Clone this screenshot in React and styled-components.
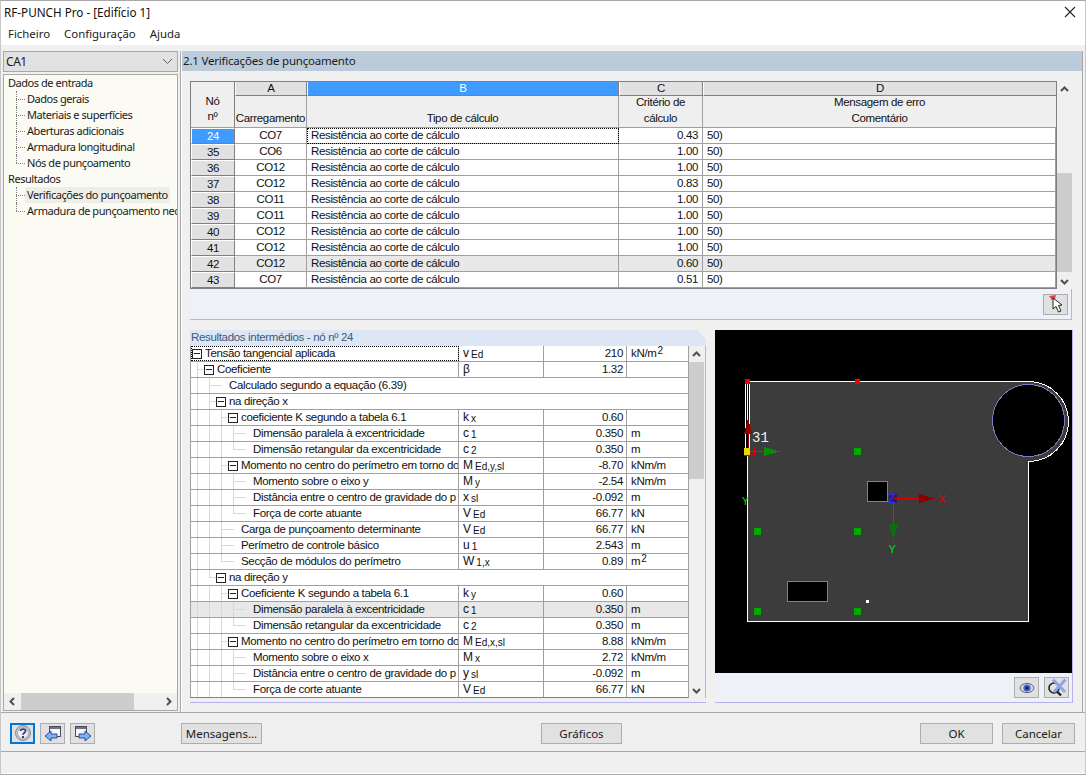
import React from "react";
import styled, { createGlobalStyle } from "styled-components";

const GlobalStyle = createGlobalStyle`
  html, body {
    margin: 0;
    padding: 0;
    background: #f0f0f0;
  }
  * {
    box-sizing: border-box;
  }
`;

const topRows = [
  ["24", "CO7", "0.43"],
  ["35", "CO6", "1.00"],
  ["36", "CO12", "1.00"],
  ["37", "CO12", "0.83"],
  ["38", "CO11", "1.00"],
  ["39", "CO11", "1.00"],
  ["40", "CO12", "1.00"],
  ["41", "CO12", "1.00"],
  ["42", "CO12", "0.60"],
  ["43", "CO7", "0.51"],
];

const inputItems = [
  "Dados gerais",
  "Materiais e superfícies",
  "Aberturas adicionais",
  "Armadura longitudinal",
  "Nós de punçoamento",
];

const resultItems = ["Verificações do punçoamento", "Armadura de punçoamento nec"];

// level, has expander, label, symbol, sub, value, unit, unit power
const detailRows = [
  { level: 0, open: true, label: "Tensão tangencial aplicada", sym: "v", sub: "Ed", value: "210", unit: "kN/m", pow: "2" },
  { level: 1, open: true, label: "Coeficiente", sym: "β", value: "1.32" },
  { level: 2, label: "Calculado segundo a equação (6.39)", wide: true },
  { level: 2, open: true, label: "na direção x", wide: true },
  { level: 3, open: true, label: "coeficiente K segundo a tabela 6.1", sym: "k", sub: "x", value: "0.60" },
  { level: 4, label: "Dimensão paralela à excentricidade", sym: "c", sub: "1", value: "0.350", unit: "m" },
  { level: 4, elbow: true, label: "Dimensão retangular da excentricidade", sym: "c", sub: "2", value: "0.350", unit: "m" },
  { level: 3, open: true, label: "Momento no centro do perímetro em torno do", sym: "M", sub: "Ed,y,sl", value: "-8.70", unit: "kNm/m" },
  { level: 4, label: "Momento sobre o eixo y", sym: "M", sub: "y", value: "-2.54", unit: "kNm/m" },
  { level: 4, label: "Distância entre o centro de gravidade do p", sym: "x", sub: "sl", value: "-0.092", unit: "m" },
  { level: 4, elbow: true, label: "Força de corte atuante", sym: "V", sub: "Ed", value: "66.77", unit: "kN" },
  { level: 3, label: "Carga de punçoamento determinante", sym: "V", sub: "Ed", value: "66.77", unit: "kN" },
  { level: 3, label: "Perímetro de controle básico", sym: "u", sub: "1", value: "2.543", unit: "m" },
  { level: 3, elbow: true, label: "Secção de módulos do perímetro", sym: "W", sub: "1,x", value: "0.89", unit: "m", pow: "2" },
  { level: 2, open: true, elbow: true, label: "na direção y", wide: true },
  { level: 3, open: true, label: "Coeficiente K segundo a tabela 6.1", sym: "k", sub: "y", value: "0.60" },
  { level: 4, label: "Dimensão paralela à excentricidade", sym: "c", sub: "1", value: "0.350", unit: "m", shade: true },
  { level: 4, elbow: true, label: "Dimensão retangular da excentricidade", sym: "c", sub: "2", value: "0.350", unit: "m" },
  { level: 3, open: true, label: "Momento no centro do perímetro em torno do", sym: "M", sub: "Ed,x,sl", value: "8.88", unit: "kNm/m" },
  { level: 4, label: "Momento sobre o eixo x", sym: "M", sub: "x", value: "2.72", unit: "kNm/m" },
  { level: 4, label: "Distância entre o centro de gravidade do p", sym: "y", sub: "sl", value: "-0.092", unit: "m" },
  { level: 4, elbow: true, label: "Força de corte atuante", sym: "V", sub: "Ed", value: "66.77", unit: "kN" },
];

const Chevron = ({ dir }) => {
  const points = {
    up: "1,6 4.5,2.5 8,6",
    down: "1,3 4.5,6.5 8,3",
    left: "6,1 2.5,4.5 6,8",
    right: "3,1 6.5,4.5 3,8",
  };
  return (
    <svg width="9" height="9" viewBox="0 0 9 9">
      <polyline points={points[dir]} fill="none" stroke="#505050" strokeWidth="2" />
    </svg>
  );
};

const HelpIcon = () => (
  <svg width="20" height="17" viewBox="0 0 20 17">
    <circle cx="10" cy="8" r="7.5" fill="#c4c4cc" stroke="#8a8a96" />
    <circle cx="10" cy="8" r="5.5" fill="#f0f0f6" stroke="#a8a8b8" />
    <path d="M7.5 6 C7.5 3.6 12.6 3.6 12.6 6 C12.6 7.8 10 7.6 10 9.8" fill="none" stroke="#3a3f78" strokeWidth="1.8" />
    <rect x="9" y="11" width="2" height="2" fill="#3a3f78" />
  </svg>
);

const PageIcon = ({ flip }) => (
  <svg width="18" height="18" viewBox="0 0 18 18">
    <g transform={flip ? "translate(18 0) scale(-1 1)" : undefined}>
      <rect x="5.5" y="1.5" width="11" height="10" fill="#f4f6fa" stroke="#4a4a5a" />
      <rect x="6" y="2" width="10" height="2" fill="#6a7590" />
      <path d="M1 11 L7 6 V9 H13 V13 H7 V16 Z" fill="#7fb2f0" stroke="#2a4f9c" />
    </g>
  </svg>
);

const PinIcon = () => (
  <svg width="20" height="20" viewBox="0 0 20 20">
    <path d="M3 2 L10 1 L9 5 L6 6 Z" fill="#e8404a" />
    <path d="M7 4 V15 L10 12.5 L12.5 18 L15 17 L12.5 11.5 L16 11 Z" fill="#fff" stroke="#222" />
  </svg>
);

const EyeIcon = () => (
  <svg width="16" height="12" viewBox="0 0 16 12">
    <ellipse cx="8" cy="6" rx="7" ry="4.6" fill="#cdd6ee" stroke="#5a6478" />
    <circle cx="8" cy="6" r="3.6" fill="#3f62c8" />
    <circle cx="8" cy="6" r="1.5" fill="#101830" />
  </svg>
);

const ResetViewIcon = () => (
  <svg width="20" height="19" viewBox="0 0 20 19">
    <circle cx="7" cy="10" r="5" fill="none" stroke="#222" strokeWidth="1.6" />
    <path d="M10.5 14 L14 17.5" stroke="#222" strokeWidth="2.4" />
    <path d="M6 1.5 L18 14 M18.5 1.5 L7 14" stroke="#8aa4ee" strokeWidth="3" />
  </svg>
);

const PunchView = () => (
  <svg width="357" height="343" viewBox="715 330 357 343" shapeRendering="crispEdges">
    <path d="M747.5 381.5 H1028.5 A40 40 0 0 1 1028.5 461.5 V621.5 H747.5 Z" fill="#3c3c3c" stroke="#fff" />
    <circle cx="1028.5" cy="420.5" r="36" fill="#000" stroke="#7b7bc4" />
    <rect x="867.5" y="481.5" width="20" height="20" fill="#000" stroke="#7b7bb0" />
    <rect x="787.5" y="581.5" width="40" height="20" fill="#000" stroke="#7b7bb0" />
    {[[854, 448], [754, 528], [854, 528], [754, 608], [854, 608]].map(([x, y]) => (
      <rect key={`${x}-${y}`} x={x} y={y} width="7" height="7" fill="#00a800" />
    ))}
    <rect x="745" y="382" width="5" height="69" fill="#000" />
    <path d="M745.5 384 V449 M747.5 384 V449 M749.5 384 V449" stroke="#fff" />
    <rect x="745" y="379" width="5" height="5" fill="#f00000" />
    <rect x="855" y="379" width="5" height="5" fill="#f00000" />
    <rect x="866" y="600" width="3" height="3" fill="#fff" />
    <rect x="746" y="421" width="3" height="28" fill="#000" />
    <path d="M748 418 L752 434 H744 Z" fill="#8e0000" />
    <path d="M748 434 V450" stroke="#900000" />
    <text x="752" y="442" fill="#f0f0f0" fontFamily="Liberation Mono" fontSize="14">31</text>
    <rect x="744" y="448" width="6" height="7" fill="#e8d800" />
    <path d="M743.5 455.5 H749.5 M754.5 447 V454 H750" stroke="#e00000" fill="none" />
    <path d="M750 451.5 H764" stroke="#108010" />
    <path d="M764 447 L780 451.5 L764 456 Z" fill="#0a8c0a" />
    <text x="742" y="505" fill="#00e000" fontFamily="Liberation Sans" fontSize="10">Y</text>
    <rect x="893" y="500" width="1" height="24" fill="#108010" />
    <path d="M889 524 L893.5 540 L898 524 Z" fill="#0a700a" />
    <rect x="889" y="494" width="8" height="9" fill="#202070" />
    <rect x="894" y="498" width="26" height="1" fill="#e00000" />
    <path d="M919 494 L935 498.5 L919 503 Z" fill="#8e0000" />
    <text x="888" y="503" fill="#3030ff" fontFamily="Liberation Sans" fontSize="12">Z</text>
    <text x="938" y="503" fill="#e00000" fontFamily="Liberation Sans" fontSize="11">X</text>
    <text x="888.5" y="553" fill="#00e000" fontFamily="Liberation Sans" fontSize="11">Y</text>
  </svg>
);

const App = () => {
  return (
    <Window>
      <GlobalStyle />
      <TitleBar>
        <TitleText>RF-PUNCH Pro - [Edifício 1]</TitleText>
        <CloseGlyph>
          <svg width="12" height="12" viewBox="0 0 12 12">
            <path d="M1 1 L11 11 M11 1 L1 11" stroke="#222" strokeWidth="1.1" />
          </svg>
        </CloseGlyph>
      </TitleBar>
      <MenuBar>
        <span>Ficheiro</span>
        <span>Configuração</span>
        <span>Ajuda</span>
      </MenuBar>

      <Main>
        <Sidebar>
          <Combo>
            CA1
            <svg width="11" height="7" viewBox="0 0 11 7">
              <polyline points="1,1 5.5,5.5 10,1" fill="none" stroke="#606060" />
            </svg>
          </Combo>
          <TreePanel>
            <TreeList>
              <TreeRoot>Dados de entrada</TreeRoot>
              {inputItems.map((item, i) => (
                <TreeItem key={item} $last={i === inputItems.length - 1}>
                  <TreeLabel>{item}</TreeLabel>
                </TreeItem>
              ))}
              <TreeRoot>Resultados</TreeRoot>
              {resultItems.map((item, i) => (
                <TreeItem key={item} $last={i === resultItems.length - 1}>
                  <TreeLabel $selected={i === 0}>{item}</TreeLabel>
                </TreeItem>
              ))}
            </TreeList>
            <HScroll>
              <ArrowBox $wide>
                <Chevron dir="left" />
              </ArrowBox>
              <HThumb />
              <HTrack />
              <ArrowBox $wide>
                <Chevron dir="right" />
              </ArrowBox>
            </HScroll>
          </TreePanel>
        </Sidebar>

        <Content>
          <SectionHeader>2.1 Verificações de punçoamento</SectionHeader>
          <ContentBody>
            <TopBlock>
              <TopTableRow>
                <Grid>
                  <Corner>
                    Nó
                    <br />
                    nº
                  </Corner>
                  <ColLetter>A</ColLetter>
                  <ColLetter $active>B</ColLetter>
                  <ColLetter>C</ColLetter>
                  <ColLetter>D</ColLetter>
                  <ColTitle>Carregamento</ColTitle>
                  <ColTitle>Tipo de cálculo</ColTitle>
                  <ColTitle>
                    Critério de
                    <br />
                    cálculo
                  </ColTitle>
                  <ColTitle>
                    Mensagem de erro
                    <br />
                    Comentário
                  </ColTitle>
                  {topRows.map(([no, load, crit], i) => (
                    <React.Fragment key={no}>
                      <RowHead $active={i === 0}>{no}</RowHead>
                      <Cell $align="center" $shade={no === "42"}>{load}</Cell>
                      <Cell $focus={i === 0} $shade={no === "42"}>Resistência ao corte de cálculo</Cell>
                      <Cell $align="right" $shade={no === "42"}>{crit}</Cell>
                      <Cell $shade={no === "42"}>50)</Cell>
                    </React.Fragment>
                  ))}
                </Grid>
                <VScroll>
                  <ArrowBox>
                    <Chevron dir="up" />
                  </ArrowBox>
                  <VGap $h={76} />
                  <VThumb $h={99} />
                  <VGap />
                  <ArrowBox>
                    <Chevron dir="down" />
                  </ArrowBox>
                </VScroll>
              </TopTableRow>
              <ToolStrip>
                <IconButton>
                  <PinIcon />
                </IconButton>
              </ToolStrip>
            </TopBlock>

            <LowerBlock>
              <DetailPanel>
                <DetailTitle>Resultados intermédios - nó nº 24</DetailTitle>
                <DetailBody>
                  <DetailTable>
                    {detailRows.map((row, i) => (
                      <DetailRow key={i} $shade={row.shade}>
                        <NameCell $wide={row.wide} $focus={i === 0}>
                          {Array.from({ length: row.level }).map((_, k) => (
                            <Guide
                              key={k}
                              $stub={k === row.level - 1}
                              $elbow={k === row.level - 1 && row.elbow}
                              $short={row.open}
                            />
                          ))}
                          <Slot>{row.open && <Expander />}</Slot>
                          <NameText>{row.label}</NameText>
                        </NameCell>
                        {!row.wide && (
                          <>
                            <SymCell>
                              {row.sym}
                              {row.sub && <Sub>{row.sub}</Sub>}
                            </SymCell>
                            <ValueCell>{row.value}</ValueCell>
                            <UnitCell>
                              {row.unit}
                              {row.pow && <Pow>{row.pow}</Pow>}
                            </UnitCell>
                          </>
                        )}
                      </DetailRow>
                    ))}
                  </DetailTable>
                  <VScroll>
                    <ArrowBox>
                      <Chevron dir="up" />
                    </ArrowBox>
                    <VThumb $h={117} />
                    <VGap />
                    <ArrowBox>
                      <Chevron dir="down" />
                    </ArrowBox>
                  </VScroll>
                </DetailBody>
              </DetailPanel>

              <ViewPanel>
                <ViewCanvas>
                  <PunchView />
                </ViewCanvas>
                <ViewTools>
                  <IconButton>
                    <EyeIcon />
                  </IconButton>
                  <IconButton>
                    <ResetViewIcon />
                  </IconButton>
                </ViewTools>
              </ViewPanel>
            </LowerBlock>
          </ContentBody>
        </Content>
      </Main>

      <Footer>
        <FooterIcons>
          <SquareButton $focus>
            <HelpIcon />
          </SquareButton>
          <SquareButton>
            <PageIcon />
          </SquareButton>
          <SquareButton>
            <PageIcon flip />
          </SquareButton>
        </FooterIcons>
        <TextButton $w={81}>Mensagens...</TextButton>
        <CenterSlot>
          <TextButton $w={81}>Gráficos</TextButton>
        </CenterSlot>
        <FooterActions>
          <TextButton $w={73}>OK</TextButton>
          <TextButton $w={73}>Cancelar</TextButton>
        </FooterActions>
      </Footer>
      <StatusBar />
    </Window>
  );
};

export default App;

const uiFont = `"Noto Sans", "Liberation Sans", sans-serif`;
const gridFont = `"Liberation Sans", Arial, sans-serif`;

const Window = styled.div`
  width: 1086px;
  height: 775px;
  display: flex;
  flex-direction: column;
  overflow: hidden;
  background: #f0f0f0;
  border: 1px solid #c8c8c8;
  border-top-color: #a8a8a8;
  border-bottom-color: #a8a8a8;
  font-family: ${uiFont};
  color: #1a1a1a;
`;

const TitleBar = styled.div`
  height: 23px;
  flex: none;
  display: flex;
  align-items: center;
  justify-content: space-between;
  padding: 0 9px 2px 3px;
  background: #fff;
`;

const TitleText = styled.span`
  font-size: 11.7px;
  color: #111;
`;

const CloseGlyph = styled.span`
  display: flex;
`;

const MenuBar = styled.div`
  height: 21px;
  flex: none;
  display: flex;
  align-items: center;
  gap: 14px;
  padding: 0 0 2px 7px;
  background: #fff;
  font-size: 11.4px;
`;

const Main = styled.div`
  height: 668px;
  flex: none;
  display: flex;
  gap: 2px;
  padding: 6px 2px 0 2px;
  border-bottom: 1px solid #a8a8a8;
`;

const Sidebar = styled.div`
  width: 175px;
  flex: none;
  display: flex;
  flex-direction: column;
  gap: 2px;
  font-size: 11px;
  letter-spacing: -0.45px;
`;

const Combo = styled.div`
  height: 21px;
  flex: none;
  display: flex;
  align-items: center;
  justify-content: space-between;
  padding: 0 4px 0 2px;
  background: #e1e1e1;
  border: 1px solid #a8a8a8;
  font-size: 12px;
`;

const TreePanel = styled.div`
  flex: 1;
  min-height: 0;
  display: flex;
  flex-direction: column;
  border: 1px solid #a8a8a8;
  background: #fbfaf3;
  margin-bottom: 1px;
`;

const TreeList = styled.div`
  flex: 1;
  min-height: 0;
  overflow: hidden;
`;

const TreeRoot = styled.div`
  height: 16px;
  line-height: 15px;
  padding-left: 4px;
  white-space: nowrap;
`;

const TreeItem = styled.div`
  position: relative;
  height: 16px;
  padding-left: 21px;
  white-space: nowrap;

  &::before {
    content: "";
    position: absolute;
    left: 12px;
    top: 0;
    height: ${(p) => (p.$last ? "8px" : "16px")};
    border-left: 1px dotted #808080;
  }
  &::after {
    content: "";
    position: absolute;
    left: 12px;
    top: 8px;
    width: 9px;
    border-top: 1px dotted #808080;
  }
`;

const TreeLabel = styled.span`
  display: inline-block;
  height: 16px;
  line-height: 15px;
  padding: 0 2px;
  background: ${(p) => (p.$selected ? "#eeeee8" : "transparent")};
`;

const HScroll = styled.div`
  height: 17px;
  flex: none;
  display: flex;
  background: #f0f0f0;
`;

const ArrowBox = styled.div`
  width: ${(p) => (p.$wide ? "17px" : "auto")};
  height: ${(p) => (p.$wide ? "17px" : "16px")};
  flex: none;
  display: flex;
  align-items: center;
  justify-content: center;
`;

const HThumb = styled.div`
  width: 113px;
  background: #cdcdcd;
`;

const HTrack = styled.div`
  flex: 1;
`;

const Content = styled.div`
  flex: 1;
  min-width: 0;
  display: flex;
  flex-direction: column;
  border-left: 1px solid #a8a8a8;
  border-right: 1px solid #a8a8a8;
  box-shadow: inset 1px 0 0 #fff;
`;

const SectionHeader = styled.div`
  height: 20px;
  flex: none;
  margin-left: 1px;
  padding-left: 1px;
  background: #bccbda;
  font-size: 11.5px;
  letter-spacing: -0.2px;
  line-height: 20px;
`;

const ContentBody = styled.div`
  flex: 1;
  min-height: 0;
  display: flex;
  flex-direction: column;
  gap: 10px;
  padding: 10px 10px 0 9px;
`;

const TopBlock = styled.div`
  flex: none;
  display: flex;
  flex-direction: column;
  border-right: 1px solid #b4b4ea;
  border-bottom: 1px solid #b4b4ea;
  background: #eef2f8;
`;

const TopTableRow = styled.div`
  display: flex;
  background: #f0f0f0;
`;

const Grid = styled.div`
  display: grid;
  grid-template-columns: 44px 72px 312px 84px 353px;
  grid-template-rows: 14px 32px repeat(10, 16px);
  width: 867px;
  border: 1px solid #808080;
  font-family: ${gridFont};
  font-size: 11.5px;
  letter-spacing: -0.35px;
  color: #111;
`;

const Corner = styled.div`
  grid-row: span 2;
  display: flex;
  align-items: center;
  justify-content: center;
  text-align: center;
  line-height: 15px;
  padding-top: 8px;
  background: #efefef;
  border-right: 1px solid #808080;
  border-bottom: 1px solid #a0a0a0;
`;

const ColLetter = styled.div`
  text-align: center;
  line-height: 13px;
  color: ${(p) => (p.$active ? "#fff" : "#111")};
  background: ${(p) => (p.$active ? "#3f9bff" : "#e1e1e1")};
  border-right: 1px solid #808080;
  border-bottom: 1px solid #808080;
  border-left: 1px solid #fff;
  &:nth-child(5) {
    border-right: none;
  }
`;

const ColTitle = styled.div`
  display: flex;
  align-items: flex-end;
  justify-content: center;
  text-align: center;
  line-height: 16px;
  padding-bottom: 1px;
  background: #efefef;
  border-right: 1px solid #a0a0a0;
  border-bottom: 1px solid #a0a0a0;
  &:nth-child(9) {
    border-right: none;
  }
`;

const RowHead = styled.div`
  text-align: center;
  line-height: 14px;
  color: ${(p) => (p.$active ? "#fff" : "#111")};
  background: ${(p) => (p.$active ? "#3f9bff" : "#e1e1e1")};
  border: 1px solid #fff;
  border-right: 1px solid #808080;
  border-bottom: 1px solid #808080;
`;

const Cell = styled.div`
  padding: 0 4px;
  line-height: 15px;
  text-align: ${(p) => p.$align || "left"};
  white-space: nowrap;
  overflow: hidden;
  background: ${(p) => (p.$shade ? "#e8e8e8" : "#fff")};
  border-right: 1px solid #a0a0a0;
  border-bottom: 1px solid #a0a0a0;
  outline: ${(p) => (p.$focus ? "1px dotted #000" : "none")};
  outline-offset: -1px;
  &:nth-child(5n + 10) {
    border-right: none;
  }
`;

const VScroll = styled.div`
  width: 15px;
  flex: none;
  display: flex;
  flex-direction: column;
  background: #f0f0f0;
`;

const VThumb = styled.div`
  height: ${(p) => p.$h}px;
  flex: none;
  background: #cdcdcd;
`;

const VGap = styled.div`
  flex: ${(p) => (p.$h ? "none" : "1")};
  height: ${(p) => (p.$h ? `${p.$h}px` : "auto")};
`;

const ToolStrip = styled.div`
  height: 30px;
  display: flex;
  align-items: center;
  justify-content: flex-end;
  gap: 6px;
  padding-right: 3px;
`;

const IconButton = styled.div`
  width: 25px;
  height: 21px;
  display: flex;
  align-items: center;
  justify-content: center;
  background: #e1e1e1;
  border: 1px solid #adadad;
`;

const LowerBlock = styled.div`
  flex: none;
  display: flex;
  gap: 9px;
`;

const DetailPanel = styled.div`
  width: 516px;
  flex: none;
  border-bottom: 1px solid #b4b4ea;
`;

const DetailTitle = styled.div`
  height: 16px;
  padding-left: 1px;
  background: #dde6f4;
  clip-path: polygon(0 0, 507px 0, 100% 9px, 100% 100%, 0 100%);
  font-family: ${gridFont};
  font-size: 11.5px;
  letter-spacing: -0.33px;
  line-height: 15px;
  color: #3a5a78;
`;

const DetailBody = styled.div`
  display: flex;
  padding-right: 1px;
  border-right: 1px solid #b4b4ea;
  background: #eef2f8;
`;

const DetailTable = styled.div`
  width: 499px;
  flex: none;
  display: flex;
  flex-direction: column;
  border: 1px solid #a0a0a0;
  border-bottom-color: #808080;
  border-top: none;
  background: #fff;
  font-family: ${gridFont};
  font-size: 11.5px;
  letter-spacing: -0.33px;
  color: #111;
`;

const DetailRow = styled.div`
  height: 16px;
  flex: none;
  display: flex;
  background: ${(p) => (p.$shade ? "#e8e8e8" : "transparent")};
  border-bottom: 1px solid #a0a0a0;
  &:last-child {
    height: 15px;
    border-bottom: none;
  }
`;

const NameCell = styled.div`
  width: ${(p) => (p.$wide ? "100%" : "268px")};
  flex: none;
  display: flex;
  overflow: hidden;
  border-right: ${(p) => (p.$wide ? "none" : "1px solid #a0a0a0")};
  outline: ${(p) => (p.$focus ? "1px dotted #000" : "none")};
  outline-offset: -1px;
`;

const Guide = styled.span`
  position: relative;
  width: 12px;
  height: 16px;
  flex: none;

  &::before {
    content: "";
    position: absolute;
    left: 6px;
    top: -1px;
    height: ${(p) => (p.$elbow ? "9px" : "17px")};
    border-left: 1px solid #d8d8d8;
  }
  &::after {
    content: ${(p) => (p.$stub ? '""' : "none")};
    position: absolute;
    left: 6px;
    top: 7px;
    width: ${(p) => (p.$short ? "8px" : "13px")};
    border-top: 1px solid #d8d8d8;
  }
`;

const Slot = styled.span`
  width: 14px;
  height: 15px;
  flex: none;
  display: flex;
  align-items: center;
  padding-left: 1px;
`;

const Expander = styled.span`
  position: relative;
  width: 10px;
  height: 10px;
  border: 1px solid #222;
  background: #fff;

  &::after {
    content: "";
    position: absolute;
    left: 1px;
    right: 1px;
    top: 3px;
    border-top: 1px solid #222;
  }
`;

const NameText = styled.span`
  line-height: 15px;
  white-space: nowrap;
`;

const SymCell = styled.div`
  width: 85px;
  flex: none;
  padding-left: 4px;
  font-size: 12px;
  letter-spacing: 0;
  line-height: 15px;
  white-space: nowrap;
  overflow: hidden;
  border-right: 1px solid #a0a0a0;
`;

const Sub = styled.span`
  margin-left: 2px;
  font-size: 10px;
  position: relative;
  top: 1px;
`;

const ValueCell = styled.div`
  width: 83px;
  flex: none;
  padding-right: 3px;
  text-align: right;
  line-height: 15px;
  border-right: 1px solid #a0a0a0;
`;

const UnitCell = styled.div`
  flex: 1;
  padding-left: 4px;
  line-height: 15px;
  white-space: nowrap;
`;

const Pow = styled.span`
  margin-left: 1px;
  font-size: 10px;
  position: relative;
  top: -3px;
`;

const ViewPanel = styled.div`
  width: 358px;
  flex: none;
  display: flex;
  flex-direction: column;
  border-right: 1px solid #b4b4ea;
  border-bottom: 1px solid #b4b4ea;
  background: #eef2f8;
`;

const ViewCanvas = styled.div`
  height: 343px;
  flex: none;
  background: #000;
  svg {
    display: block;
  }
`;

const ViewTools = styled.div`
  height: 29px;
  display: flex;
  align-items: center;
  justify-content: flex-end;
  gap: 5px;
  padding-right: 3px;
`;

const Footer = styled.div`
  height: 39px;
  flex: none;
  display: flex;
  align-items: flex-start;
  padding: 10px 10px 0 9px;
  border-bottom: 1px solid #a8a8a8;
`;

const FooterIcons = styled.div`
  width: 171px;
  flex: none;
  display: flex;
  gap: 5px;
`;

const SquareButton = styled.div`
  width: 25px;
  height: 21px;
  display: flex;
  align-items: center;
  justify-content: center;
  background: #e1e1e1;
  border: ${(p) => (p.$focus ? "2px solid #0078d7" : "1px solid #adadad")};
`;

const TextButton = styled.div`
  width: ${(p) => p.$w}px;
  height: 21px;
  flex: none;
  display: flex;
  align-items: center;
  justify-content: center;
  background: #e1e1e1;
  border: 1px solid #adadad;
  font-size: 11.5px;
`;

const CenterSlot = styled.div`
  width: 360px;
  flex: none;
  display: flex;
  justify-content: flex-end;
`;

const FooterActions = styled.div`
  margin-left: auto;
  display: flex;
  gap: 9px;
`;

const StatusBar = styled.div`
  flex: 1;
  background: #f0f0f0;
  border-bottom: 1px solid #fff;
`;
